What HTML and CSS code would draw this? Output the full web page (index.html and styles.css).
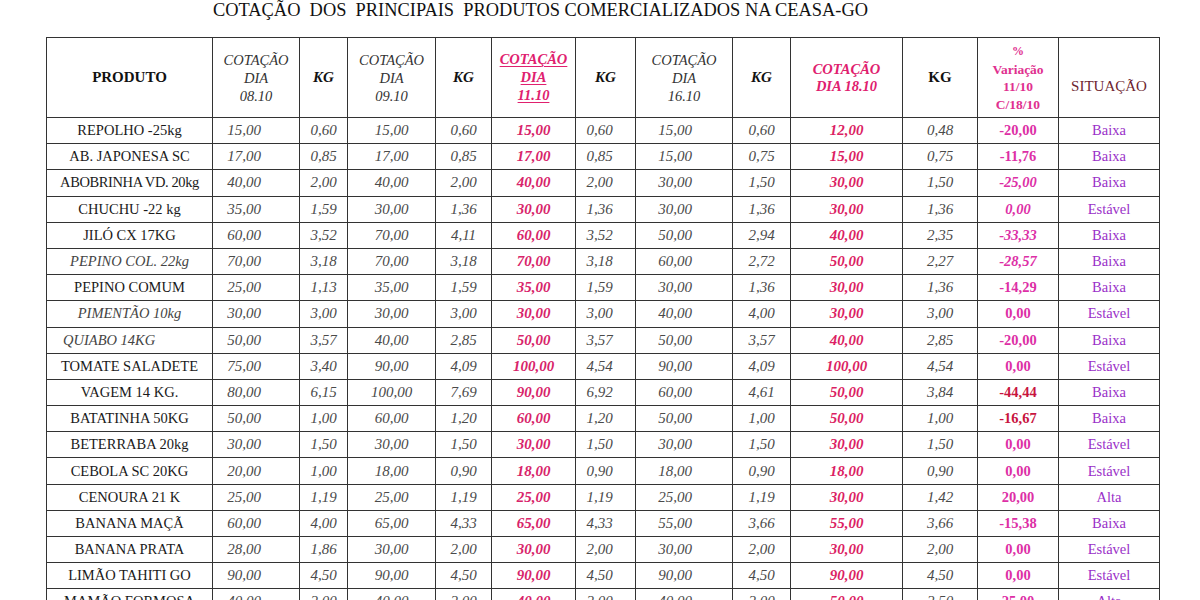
FILE: index.html
```html
<!DOCTYPE html>
<html lang="pt-BR">
<head>
<meta charset="utf-8">
<title>Cotação CEASA-GO</title>
<link rel="stylesheet" href="styles.css">
</head>
<body>
<div class="page">
  <h1 class="title">COTAÇÃO  DOS  PRINCIPAIS  PRODUTOS COMERCIALIZADOS NA CEASA-GO</h1>
  <table class="quotes">
    <colgroup>
      <col class="w-prod"><col class="w-d1"><col class="w-k1"><col class="w-d2"><col class="w-k2"><col class="w-d3"><col class="w-k3"><col class="w-d4"><col class="w-k4"><col class="w-d5"><col class="w-k5"><col class="w-var"><col class="w-sit">
    </colgroup>
    <thead>
      <tr class="head">
        <th class="h-prod">PRODUTO</th>
        <th class="h-date">COTAÇÃO<br>DIA<br>08.10</th>
        <th class="h-kg">KG</th>
        <th class="h-date">COTAÇÃO<br>DIA<br>09.10</th>
        <th class="h-kg">KG</th>
        <th class="h-pink h-under"><span>COTAÇÃO</span><br><span>DIA</span><br><span>11.10</span></th>
        <th class="h-kg">KG</th>
        <th class="h-date">COTAÇÃO<br>DIA<br>16.10</th>
        <th class="h-kg">KG</th>
        <th class="h-pink">COTAÇÃO<br>DIA 18.10</th>
        <th class="h-kg h-kg-up">KG</th>
        <th class="h-var"><span class="pct">%</span><br>Variação<br>11/10<br>C/18/10</th>
        <th class="h-sit">SITUAÇÃO</th>
      </tr>
    </thead>
    <tbody>
      <tr><td class="prod">REPOLHO -25kg</td><td class="n d1">15,00</td><td class="n">0,60</td><td class="n">15,00</td><td class="n">0,60</td><td class="pk">15,00</td><td class="n k3">0,60</td><td class="n d4">15,00</td><td class="n">0,60</td><td class="pk pk2">12,00</td><td class="n">0,48</td><td class="var">-20,00</td><td class="sit">Baixa</td></tr>
      <tr><td class="prod">AB. JAPONESA SC</td><td class="n d1">17,00</td><td class="n">0,85</td><td class="n">17,00</td><td class="n">0,85</td><td class="pk">17,00</td><td class="n k3">0,85</td><td class="n d4">15,00</td><td class="n">0,75</td><td class="pk pk2">15,00</td><td class="n">0,75</td><td class="var">-11,76</td><td class="sit">Baixa</td></tr>
      <tr><td class="prod tight">ABOBRINHA VD. 20kg</td><td class="n d1">40,00</td><td class="n">2,00</td><td class="n">40,00</td><td class="n">2,00</td><td class="pk">40,00</td><td class="n k3">2,00</td><td class="n d4">30,00</td><td class="n">1,50</td><td class="pk pk2">30,00</td><td class="n">1,50</td><td class="var it">-25,00</td><td class="sit">Baixa</td></tr>
      <tr><td class="prod">CHUCHU -22 kg</td><td class="n d1">35,00</td><td class="n">1,59</td><td class="n">30,00</td><td class="n">1,36</td><td class="pk">30,00</td><td class="n k3">1,36</td><td class="n d4">30,00</td><td class="n">1,36</td><td class="pk pk2">30,00</td><td class="n">1,36</td><td class="var it">0,00</td><td class="sit">Estável</td></tr>
      <tr><td class="prod">JILÓ CX 17KG</td><td class="n d1">60,00</td><td class="n">3,52</td><td class="n">70,00</td><td class="n">4,11</td><td class="pk">60,00</td><td class="n k3">3,52</td><td class="n d4">50,00</td><td class="n">2,94</td><td class="pk pk2">40,00</td><td class="n">2,35</td><td class="var it">-33,33</td><td class="sit">Baixa</td></tr>
      <tr><td class="prod prod-it">PEPINO COL. 22kg</td><td class="n d1">70,00</td><td class="n">3,18</td><td class="n">70,00</td><td class="n">3,18</td><td class="pk">70,00</td><td class="n k3">3,18</td><td class="n d4">60,00</td><td class="n">2,72</td><td class="pk pk2">50,00</td><td class="n">2,27</td><td class="var it">-28,57</td><td class="sit">Baixa</td></tr>
      <tr><td class="prod">PEPINO COMUM</td><td class="n d1">25,00</td><td class="n">1,13</td><td class="n">35,00</td><td class="n">1,59</td><td class="pk">35,00</td><td class="n k3">1,59</td><td class="n d4">30,00</td><td class="n">1,36</td><td class="pk pk2">30,00</td><td class="n">1,36</td><td class="var">-14,29</td><td class="sit">Baixa</td></tr>
      <tr><td class="prod prod-it">PIMENTÃO 10kg</td><td class="n d1">30,00</td><td class="n">3,00</td><td class="n">30,00</td><td class="n">3,00</td><td class="pk">30,00</td><td class="n k3">3,00</td><td class="n d4">40,00</td><td class="n">4,00</td><td class="pk pk2">30,00</td><td class="n">3,00</td><td class="var">0,00</td><td class="sit">Estável</td></tr>
      <tr><td class="prod prod-it prod-left">QUIABO 14KG</td><td class="n d1">50,00</td><td class="n">3,57</td><td class="n">40,00</td><td class="n">2,85</td><td class="pk">50,00</td><td class="n k3">3,57</td><td class="n d4">50,00</td><td class="n">3,57</td><td class="pk pk2">40,00</td><td class="n">2,85</td><td class="var">-20,00</td><td class="sit">Baixa</td></tr>
      <tr><td class="prod">TOMATE SALADETE</td><td class="n d1">75,00</td><td class="n">3,40</td><td class="n">90,00</td><td class="n">4,09</td><td class="pk">100,00</td><td class="n k3">4,54</td><td class="n d4">90,00</td><td class="n">4,09</td><td class="pk pk2">100,00</td><td class="n">4,54</td><td class="var">0,00</td><td class="sit">Estável</td></tr>
      <tr><td class="prod">VAGEM 14 KG.</td><td class="n d1">80,00</td><td class="n">6,15</td><td class="n">100,00</td><td class="n">7,69</td><td class="pk">90,00</td><td class="n k3">6,92</td><td class="n d4">60,00</td><td class="n">4,61</td><td class="pk pk2">50,00</td><td class="n">3,84</td><td class="var dark">-44,44</td><td class="sit">Baixa</td></tr>
      <tr><td class="prod">BATATINHA 50KG</td><td class="n d1">50,00</td><td class="n">1,00</td><td class="n">60,00</td><td class="n">1,20</td><td class="pk">60,00</td><td class="n k3">1,20</td><td class="n d4">50,00</td><td class="n">1,00</td><td class="pk pk2">50,00</td><td class="n">1,00</td><td class="var dark">-16,67</td><td class="sit">Baixa</td></tr>
      <tr><td class="prod">BETERRABA 20kg</td><td class="n d1">30,00</td><td class="n">1,50</td><td class="n">30,00</td><td class="n">1,50</td><td class="pk">30,00</td><td class="n k3">1,50</td><td class="n d4">30,00</td><td class="n">1,50</td><td class="pk pk2">30,00</td><td class="n">1,50</td><td class="var">0,00</td><td class="sit">Estável</td></tr>
      <tr><td class="prod">CEBOLA SC 20KG</td><td class="n d1">20,00</td><td class="n">1,00</td><td class="n">18,00</td><td class="n">0,90</td><td class="pk">18,00</td><td class="n k3">0,90</td><td class="n d4">18,00</td><td class="n">0,90</td><td class="pk pk2">18,00</td><td class="n">0,90</td><td class="var">0,00</td><td class="sit">Estável</td></tr>
      <tr><td class="prod">CENOURA 21 K</td><td class="n d1">25,00</td><td class="n">1,19</td><td class="n">25,00</td><td class="n">1,19</td><td class="pk">25,00</td><td class="n k3">1,19</td><td class="n d4">25,00</td><td class="n">1,19</td><td class="pk pk2">30,00</td><td class="n">1,42</td><td class="var">20,00</td><td class="sit">Alta</td></tr>
      <tr><td class="prod">BANANA MAÇÃ</td><td class="n d1">60,00</td><td class="n">4,00</td><td class="n">65,00</td><td class="n">4,33</td><td class="pk">65,00</td><td class="n k3">4,33</td><td class="n d4">55,00</td><td class="n">3,66</td><td class="pk pk2">55,00</td><td class="n">3,66</td><td class="var">-15,38</td><td class="sit">Baixa</td></tr>
      <tr><td class="prod">BANANA PRATA</td><td class="n d1">28,00</td><td class="n">1,86</td><td class="n">30,00</td><td class="n">2,00</td><td class="pk">30,00</td><td class="n k3">2,00</td><td class="n d4">30,00</td><td class="n">2,00</td><td class="pk pk2">30,00</td><td class="n">2,00</td><td class="var">0,00</td><td class="sit">Estável</td></tr>
      <tr><td class="prod">LIMÃO TAHITI GO</td><td class="n d1">90,00</td><td class="n">4,50</td><td class="n">90,00</td><td class="n">4,50</td><td class="pk">90,00</td><td class="n k3">4,50</td><td class="n d4">90,00</td><td class="n">4,50</td><td class="pk pk2">90,00</td><td class="n">4,50</td><td class="var">0,00</td><td class="sit">Estável</td></tr>
      <tr><td class="prod">MAMÃO FORMOSA</td><td class="n d1">40,00</td><td class="n">2,00</td><td class="n">40,00</td><td class="n">2,00</td><td class="pk">40,00</td><td class="n k3">2,00</td><td class="n d4">40,00</td><td class="n">2,00</td><td class="pk pk2">50,00</td><td class="n">2,50</td><td class="var">25,00</td><td class="sit">Alta</td></tr>
    </tbody>
  </table>
</div>
</body>
</html>
```

FILE: styles.css
```css
html, body {
  margin: 0;
  padding: 0;
  background: #ffffff;
}

body {
  font-family: "Liberation Serif", "Times New Roman", serif;
  color: #222;
}

.page {
  padding: 0 0 0 46px;
}

.title {
  margin: 0 0 17px 167px;
  font-size: 18.4px;
  line-height: 20px;
  font-weight: normal;
  color: #111;
  white-space: pre;
  letter-spacing: 0;
}

.quotes {
  border-collapse: collapse;
  table-layout: fixed;
  width: 1114px;
}

.quotes th,
.quotes td {
  border: 1px solid #333;
  padding: 0;
  text-align: center;
  vertical-align: middle;
  overflow: hidden;
  white-space: nowrap;
}

.w-prod { width: 166px; }
.w-d1 { width: 87px; }
.w-k1 { width: 48px; }
.w-d2 { width: 88px; }
.w-k2 { width: 56px; }
.w-d3 { width: 84px; }
.w-k3 { width: 60px; }
.w-d4 { width: 97px; }
.w-k4 { width: 58px; }
.w-d5 { width: 112px; }
.w-k5 { width: 75px; }
.w-var { width: 81px; }
.w-sit { width: 101px; }

.head {
  height: 80px;
}

.quotes th {
  font-weight: normal;
}

.h-prod {
  font-size: 15px;
  font-weight: bold !important;
  color: #111;
}

.h-date {
  font-size: 14.5px;
  font-style: italic;
  line-height: 18px;
  color: #333;
}

.h-kg {
  font-size: 15px;
  font-style: italic;
  font-weight: bold !important;
  color: #111;
}

.h-kg-up {
  font-style: normal;
}

.h-pink {
  font-size: 14.5px;
  font-style: italic;
  font-weight: bold !important;
  line-height: 17px;
  color: #e0206e;
}

.h-under {
  line-height: 18px;
  padding-bottom: 2px !important;
}

.h-under span {
  text-decoration: underline;
  text-decoration-thickness: 1px;
  text-underline-offset: 2px;
}

.h-var {
  font-size: 13.5px;
  font-weight: bold !important;
  line-height: 17.5px;
  color: #e0308f;
}

.pct {
  font-size: 12px;
}

.h-sit {
  font-size: 15px;
  color: #6e1f30;
  padding-top: 18px !important;
}

.quotes tbody tr {
  height: 26.2px;
}

.prod {
  font-size: 14.5px;
  color: #1a1a1a;
}

.prod.tight {
  letter-spacing: -0.4px;
}

.prod-it {
  font-style: italic;
  color: #444;
}

.prod-left {
  text-align: left !important;
  padding-left: 16px !important;
}

.n {
  font-size: 15px;
  font-style: italic;
  color: #4a4a4a;
}

.d1 {
  padding-right: 24px !important;
}

.k3 {
  padding-right: 12px !important;
}

.d4 {
  padding-right: 18px !important;
}

.pk {
  font-size: 15px;
  font-style: italic;
  font-weight: bold;
  color: #d8246a;
}

.pk2 {
  color: #dc1f64;
}

.var {
  font-size: 14.5px;
  font-weight: bold;
  color: #dd2fa6;
}

.var.it {
  font-style: italic;
}

.var.dark {
  color: #c8143f;
}

.sit {
  font-size: 14.5px;
  color: #9a2fc8;
}
```
